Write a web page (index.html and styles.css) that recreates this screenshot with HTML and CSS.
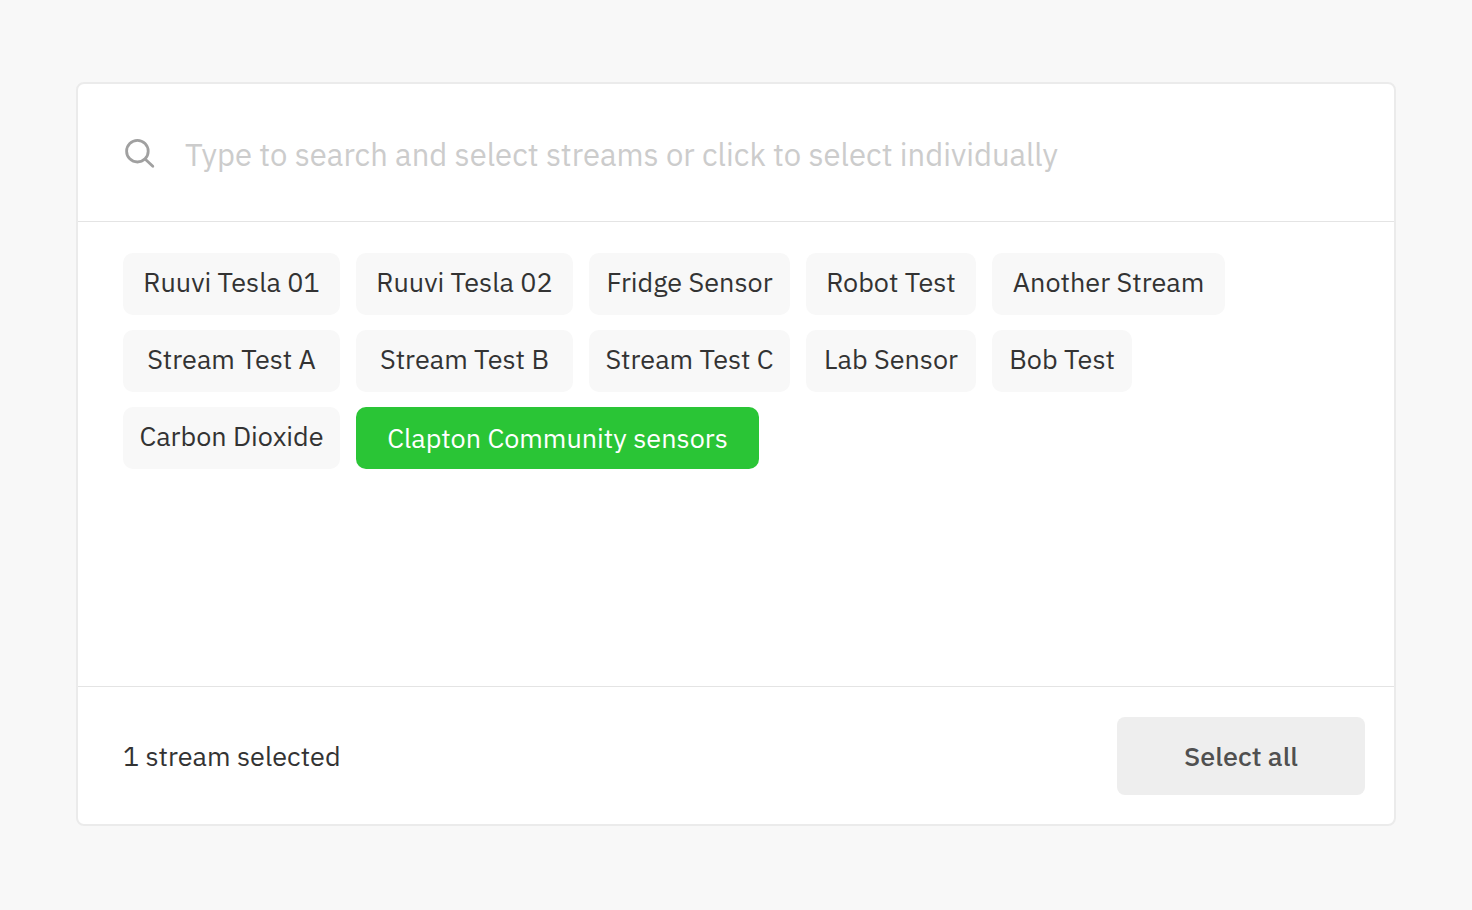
FILE: index.html
```html
<!DOCTYPE html>
<html lang="en">
<head>
<meta charset="utf-8">
<title>Select streams</title>
<link rel="stylesheet" href="styles.css">
</head>
<body>
<main class="panel">
  <label class="search">
    <svg class="search-icon" viewBox="0 0 32 32" aria-hidden="true"><circle cx="13.4" cy="12.2" r="10.8"/><path d="M21.3 20.2L28.8 27.3"/></svg>
    <input class="search-input" type="text" aria-label="Search streams" placeholder="Type to search and select streams or click to select individually">
  </label>
  <section class="streams">
    <div class="chips">
      <button class="chip" type="button">Ruuvi Tesla 01</button>
      <button class="chip" type="button">Ruuvi Tesla 02</button>
      <button class="chip" type="button">Fridge Sensor</button>
      <button class="chip" type="button">Robot Test</button>
      <button class="chip chip-wide" type="button">Another Stream</button>
      <button class="chip" type="button">Stream Test A</button>
      <button class="chip" type="button">Stream Test B</button>
      <button class="chip" type="button">Stream Test C</button>
      <button class="chip" type="button">Lab Sensor</button>
      <button class="chip chip-narrow" type="button">Bob Test</button>
      <button class="chip" type="button">Carbon Dioxide</button>
      <button class="chip chip-selected" type="button" aria-pressed="true">Clapton Community sensors</button>
    </div>
  </section>
  <footer class="footer">
    <span class="count">1 stream selected</span>
    <button class="select-all" type="button">Select all</button>
  </footer>
</main>
</body>
</html>
```

FILE: styles.css
```css
* {
  box-sizing: border-box;
}

body {
  margin: 0;
  padding: 82px 76px;
  background: #f8f8f8;
  color: #333;
  font-family: "IBM Plex Sans", "Noto Sans", sans-serif;
  font-size: 27px;
}

button,
input {
  border: 0;
  font: inherit;
  color: inherit;
}

.panel {
  background: #fff;
  border: 2px solid #ebebeb;
  border-radius: 8px;
}

.search {
  display: flex;
  align-items: center;
  gap: 29px;
  padding: 50px 46px 46px;
  border-bottom: 1px solid #e4e4e4;
}

.search-icon {
  flex: none;
  width: 32px;
  height: 32px;
  fill: none;
  stroke: #a0a0a0;
  stroke-width: 2.8;
  stroke-linecap: round;
}

.search-input {
  flex: 1;
  min-width: 0;
  height: 41px;
  padding: 0;
  background: none;
  font-size: 31px;
  outline: none;
}

.search-input::placeholder {
  color: #ccc;
  opacity: 1;
}

.streams {
  min-height: 464px;
  padding: 31px 45px;
}

.chips {
  display: grid;
  grid-template-columns: 217px 217px 201px 170px max-content;
  gap: 15px 16px;
}

.chip {
  height: 62px;
  padding: 0 8px 6px;
  border-radius: 10px;
  background: #f8f8f8;
  white-space: nowrap;
}

.chip-wide {
  width: 233px;
}

.chip-narrow {
  width: 140px;
}

.chip-selected {
  grid-column: span 2;
  justify-self: start;
  width: 403px;
  padding-bottom: 2px;
  background: #2ac536;
  color: #fff;
}

.footer {
  display: flex;
  align-items: center;
  justify-content: space-between;
  padding: 30px 29px 29px 45px;
  border-top: 1px solid #e4e4e4;
}

.count {
  padding-bottom: 2px;
}

.select-all {
  width: 248px;
  height: 78px;
  padding: 0 8px 2px;
  border-radius: 8px;
  background: #eee;
  color: #505050;
  font-weight: 500;
}
```
